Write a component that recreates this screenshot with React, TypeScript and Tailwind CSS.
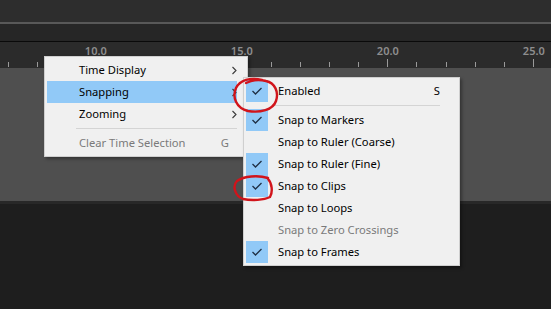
import type { ReactNode } from 'react';

/* ── Timeline ruler ─────────────────────────────────────────── */

const PX_PER_UNIT = 29.2;
const ORIGIN_X = 95.3 - 10 * PX_PER_UNIT; // x of 0.0

const Ruler = () => {
  const ticks = Array.from({ length: 27 }, (_, n) => n).filter((n) => {
    const x = ORIGIN_X + n * PX_PER_UNIT;
    return x > 0 && x < 551;
  });

  return (
    <div className="relative h-[26px] bg-[#2b2b2b]">
      {ticks.map((n) => {
        const x = ORIGIN_X + n * PX_PER_UNIT;
        const major = n % 5 === 0;
        return (
          <div key={n}>
            <div
              className={`absolute bottom-[1px] w-px bg-[#9a9a9a] ${major ? 'h-[8px]' : 'h-[5px]'}`}
              style={{ left: Math.round(x) }}
            />
            {major && (
              <span
                className="absolute top-[2px] -translate-x-1/2 font-['Noto_Sans',sans-serif] text-[11px] font-semibold leading-[14px] text-[#8e8e8e]"
                style={{ left: x + 0.5 }}
              >
                {n}.0
              </span>
            )}
          </div>
        );
      })}
    </div>
  );
};

/* ── Menu pieces ────────────────────────────────────────────── */

const Chevron = () => (
  <svg width="6" height="9" viewBox="0 0 6 9" className="text-[#3a3a3a]">
    <path d="M1.5 1 L5 4.5 L1.5 8" fill="none" stroke="currentColor" strokeWidth="1.1" />
  </svg>
);

const Check = () => (
  <div className="flex h-[22px] w-[22px] items-center justify-center bg-[#91c9f7]">
    <svg width="12" height="10" viewBox="0 0 12 10">
      <path d="M1.5 5 L4.5 8 L10.5 2" fill="none" stroke="#1f2f44" strokeWidth="1.3" />
    </svg>
  </div>
);

type RowProps = {
  label: string;
  checked?: boolean;
  disabled?: boolean;
  active?: boolean;
  shortcut?: string;
  submenu?: boolean;
  shortcutGap?: boolean; // leaves room for the chevron column
};

const MenuRow = ({ label, checked, disabled, active, shortcut, submenu, shortcutGap }: RowProps) => (
  <div
    className={`flex h-[22px] items-center ${active ? 'bg-[#91c9f7]' : ''} ${
      disabled ? 'text-[#7a7a7a]' : 'text-black'
    }`}
  >
    <div className="w-[32px]">{checked && <Check />}</div>
    <span className="flex-1 leading-none">{label}</span>
    {shortcut && (
      <span className={`leading-none ${shortcutGap ? 'mr-[8px]' : ''}`}>{shortcut}</span>
    )}
    {submenu && <Chevron />}
  </div>
);

const Separator = () => (
  <div className="flex h-[7px] items-center pl-[29px]">
    <div className="h-px flex-1 bg-[#d4d4d4]" />
  </div>
);

const Menu = ({ className, children }: { className: string; children: ReactNode }) => (
  <div
    className={`absolute border border-[#cfcfcf] bg-[#f0f0f0] p-[2px] font-['Noto_Sans',sans-serif] text-[11.2px] shadow-[2px_2px_3px_rgba(0,0,0,0.35)] ${className}`}
  >
    {children}
  </div>
);

/* ── Hand drawn annotation ──────────────────────────────────── */

const RedCircles = () => (
  <svg className="pointer-events-none absolute left-0 top-0" width="551" height="309">
    <path
      d="M262 80 C250 77 240 80 236 88 C232 97 236 108 248 111 C260 113 273 110 276 101 C279 92 275 83 266 81 C258 79 250 81 246 83"
      fill="none"
      stroke="#d1141b"
      strokeWidth="2.4"
      strokeLinecap="round"
    />
    <path
      d="M268 178 C258 175 244 176 237 181 C232 186 235 196 243 199 C252 201 264 200 270 197 C273 192 272 183 268 179"
      fill="none"
      stroke="#d1141b"
      strokeWidth="2.4"
      strokeLinecap="round"
    />
  </svg>
);

export default function App() {
  return (
    <div className="relative h-[309px] w-[551px] overflow-hidden bg-[#1e1e1e]">
      <div className="h-[22px] bg-[#2d2d2d]" />
      <div className="h-[2px] bg-[#585858]" />
      <div className="h-[17px] bg-[#262626]" />
      <div className="h-px bg-[#0a0a0a]" />
      <Ruler />
      <div className="h-[133px] bg-[#4f4f4f]" />
      <div className="h-[3px] bg-[#282828]" />

      <Menu className="left-[44px] top-[56px] w-[204px] pr-[10px]">
        <MenuRow label="Time Display" submenu />
        <MenuRow label="Snapping" submenu active />
        <MenuRow label="Zooming" submenu />
        <Separator />
        <MenuRow label="Clear Time Selection" shortcut="G" shortcutGap disabled />
      </Menu>

      <Menu className="left-[243px] top-[77px] w-[217px] pr-[19px]">
        <MenuRow label="Enabled" checked shortcut="S" />
        <Separator />
        <MenuRow label="Snap to Markers" checked />
        <MenuRow label="Snap to Ruler (Coarse)" />
        <MenuRow label="Snap to Ruler (Fine)" checked />
        <MenuRow label="Snap to Clips" checked />
        <MenuRow label="Snap to Loops" />
        <MenuRow label="Snap to Zero Crossings" disabled />
        <MenuRow label="Snap to Frames" checked />
      </Menu>

      <RedCircles />
    </div>
  );
}
